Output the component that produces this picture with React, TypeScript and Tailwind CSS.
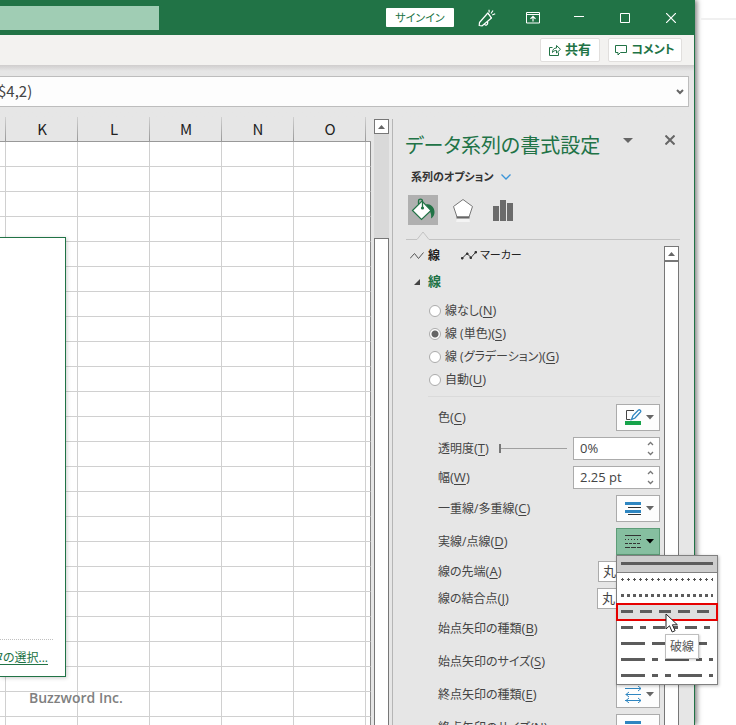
import type { ReactNode } from "react";

const columns = ["K", "L", "M", "N", "O"];
const rows = Array.from({ length: 24 }, (_, i) => i + 1);

const lineTypes = [
  { id: "none", label: "線なし", accessKey: "N" },
  { id: "solid", label: "線 (単色)", accessKey: "S" },
  { id: "gradient", label: "線 (グラデーション)", accessKey: "G" },
  { id: "auto", label: "自動", accessKey: "U" },
];

// dash/gap lengths for every style offered in the menu
const dashStyles = [
  { name: "実線", dash: "92 0" },
  { name: "点線 (丸)", dash: "" },
  { name: "点線 (角)", dash: "3 3" },
  { name: "破線", dash: "12 7" },
  { name: "一点鎖線", dash: "12 7 6 7" },
  { name: "長破線", dash: "24 7" },
  { name: "長鎖線", dash: "24 7 6 7" },
  { name: "長二点鎖線", dash: "24 7 6 7 6 7" },
];

function Key({ children }: { children: ReactNode }) {
  return (
    <span className="text-[13px]">
      (<span className="underline underline-offset-2">{children}</span>)
    </span>
  );
}

function Caret({ className }: { className: string }) {
  return (
    <svg width="8" height="5" viewBox="0 0 8 5" className={className}>
      <path d="M0 0h8L4 4.5z" fill="currentColor" />
    </svg>
  );
}

function TitleBar() {
  return (
    <header className="flex h-[35px] items-center bg-[#217346] text-white">
      <input aria-label="検索" className="h-6 w-[159px] bg-[#a0cdb4] outline-none" />
      <div className="ml-auto flex items-center">
        <button className="mr-[10px] h-[19px] w-[68px] rounded-[1px] bg-white text-[11px] leading-[19px] text-[#217346]">
          サインイン
        </button>
        <button aria-label="描画" className="flex h-[35px] w-[46px] items-center justify-center">
          <svg width="18" height="18" viewBox="0 0 18 18" fill="none" stroke="white" strokeWidth="1.2">
            <path d="M9.8 4 1.5 13.500 1.200 16.500l3 .3L13.500 9z" strokeLinejoin="round" />
            <path d="M6.500 15c.5 2 4 1.500 3-2.500M9.800 4l3.700 5" />
            <path d="M11.200 3.500 11 .8M13 4.500l2-3M14.200 6l3-1.300" />
          </svg>
        </button>
        <button aria-label="リボンの表示オプション" className="flex h-[35px] w-[46px] items-center justify-center">
          <svg width="14" height="12" viewBox="0 0 14 12" fill="none" stroke="white">
            <path d="M.5.500h13v10.500H.5zM.5 2.500h13" />
            <path d="M7 9.500V4.500M4.500 6.800 7 4.300l2.500 2.500" strokeWidth="1.200" />
          </svg>
        </button>
        <button aria-label="最小化" className="flex h-[35px] w-[46px] items-center justify-center">
          <svg width="10" height="10" viewBox="0 0 10 10" stroke="white">
            <path d="M0 3.500h10" />
          </svg>
        </button>
        <button aria-label="最大化" className="flex h-[35px] w-[46px] items-center justify-center">
          <svg width="10" height="10" viewBox="0 0 10 10" fill="none" stroke="white">
            <path d="M.5.500h9v9h-9z" />
          </svg>
        </button>
        <button aria-label="閉じる" className="flex h-[35px] w-[46px] items-center justify-center">
          <svg width="10" height="10" viewBox="0 0 10 10" stroke="white" strokeWidth="1.200">
            <path d="M0 0l10 10M10 0 0 10" />
          </svg>
        </button>
      </div>
    </header>
  );
}

function RibbonTabs() {
  return (
    <div className="flex h-[30px] items-center justify-end gap-2 bg-[#f3f2f0] pr-3 text-[13px] font-bold text-[#217346]">
      <button className="flex h-6 w-[60px] items-center justify-center gap-1 rounded-[2px] border border-[#e1dfdd] bg-white">
        <svg width="12" height="12" viewBox="0 0 12 12" fill="none" stroke="currentColor">
          <path d="M3.500 3.500H.5v8h9V8.500" />
          <path d="M3.500 8.500c0-3 1.500-4.500 4-4.500V1.500l4 3.800-4 3.700V6.500c-2 0-3 .5-4 2z" />
        </svg>
        共有
      </button>
      <button className="flex h-6 w-[74px] items-center justify-center gap-1 rounded-[2px] border border-[#e1dfdd] bg-white text-xs">
        <svg width="12" height="11" viewBox="0 0 12 11" fill="none" stroke="currentColor">
          <path d="M.5.500h11v7h-6L3 10V7.500H.500z" />
        </svg>
        コメント
      </button>
    </div>
  );
}

function FormulaBar() {
  return (
    <div className="bg-linear-to-b from-[#cfcdcd] to-[#e6e6e6] to-[6px] pt-[11px] pr-[5px] pb-[10px]">
      <div className="flex h-[31px] items-center overflow-hidden border-y border-r border-[#bdbdbd] bg-[#fdfdfd] pr-1">
        <input
          aria-label="数式バー"
          defaultValue="$4,2)"
          className="-ml-[2px] min-w-0 flex-1 bg-transparent pb-[2px] font-['Noto_Sans_CJK_JP',sans-serif] text-[15px] leading-5 text-[#444] outline-none"
        />
        <button aria-label="数式バーの展開" className="text-[#666]">
          <svg width="8" height="6" viewBox="0 0 8 6" fill="none" stroke="currentColor" strokeWidth="2">
            <path d="M1 1l3 3 3-3" />
          </svg>
        </button>
      </div>
    </div>
  );
}

function ChartPopup() {
  return (
    <div className="absolute top-[120px] left-0 flex h-[440px] w-[66px] flex-col justify-end overflow-hidden border-y border-r border-[#217346] bg-white shadow-[1px_1px_4px_rgba(0,0,0,0.2)]">
      <div className="mr-3 border-t border-dotted border-[#c0c0c0]" />
      <div className="flex justify-end pt-2 pr-[17px] pb-2 text-xs leading-[20px]">
        <a href="#select" className="whitespace-nowrap text-[#217346] underline underline-offset-2">
          タの選択...
        </a>
      </div>
    </div>
  );
}

function Sheet() {
  return (
    <div className="relative min-w-0 flex-1 overflow-hidden">
      <table className="w-full table-fixed border-separate border-spacing-0 bg-white">
        <colgroup>
          <col className="w-[6px]" />
          {columns.map((c) => (
            <col key={c} />
          ))}
          <col className="w-[5px]" />
        </colgroup>
        <thead>
          <tr className="h-[25px] bg-[#e6e6e6] font-['Noto_Sans_CJK_JP',sans-serif] text-[15px] text-[#222]">
            <th className="border-b border-[#999] bg-linear-to-b from-[#d0d0d0] to-[#999] bg-[length:1px_100%] bg-right bg-no-repeat p-0" />
            {columns.map((c) => (
              <th
                key={c}
                className="border-b border-[#999] bg-linear-to-b from-[#d0d0d0] to-[#999] bg-[length:1px_100%] bg-right bg-no-repeat p-0 leading-6 font-normal"
              >
                {c}
              </th>
            ))}
            <th className="border-b border-[#999] p-0" />
          </tr>
        </thead>
        <tbody>
          {rows.map((r) => (
            <tr key={r} className="h-[25px]">
              <td className="border-r border-b border-[#d0d0d0] p-0" />
              {columns.map((c) => (
                <td key={c} className="border-r border-b border-[#d0d0d0] p-0" />
              ))}
              <td className="border-r border-b border-r-[#888] border-b-[#d0d0d0] p-0" />
            </tr>
          ))}
        </tbody>
      </table>
      <ChartPopup />
      <p className="absolute top-[571px] left-[29px] font-['Open_Sans',sans-serif] text-sm leading-5 font-semibold text-[#808080]">
        Buzzword Inc.
      </p>
    </div>
  );
}

function ScrollUpButton() {
  return (
    <button
      aria-label="上へスクロール"
      className="flex h-[15px] w-[15px] shrink-0 items-center justify-center border border-[#777] bg-white text-[#666]"
    >
      <svg width="7" height="4" viewBox="0 0 7 4">
        <path d="M0 4h7L3.500 0z" fill="currentColor" />
      </svg>
    </button>
  );
}

function PaneTabs() {
  return (
    <div className="flex h-[30px] gap-[10px] pl-[15px]">
      <button aria-label="塗りつぶしと線" className="flex w-[30px] items-center justify-center bg-[#b0b0b0]">
        <svg width="24" height="24" viewBox="0 0 24 24" fill="none">
          <path d="M15 6c5 0 8.500 3.500 8.500 8 0 3-1 5-3.500 6.500.5-3.500 0-6-2-8z" fill="#217346" />
          <path d="M1.500 12.500 11 3l9 9.500-9.500 9z" fill="white" stroke="#217346" strokeWidth="1.200" />
          <path d="M7.500 6V3c0-2.500 4-2.500 4 0v6" stroke="#217346" strokeWidth="1.300" />
          <circle cx="11.500" cy="10" r="1.600" fill="#217346" />
        </svg>
      </button>
      <button aria-label="効果" className="flex w-[30px] items-center justify-center">
        <svg width="22" height="24" viewBox="0 0 22 24">
          <path d="M5 20.500h12l1 3.500H4z" fill="#f4f4f4" />
          <path d="M11 1.500 20.500 8.500 17 19H5L1.500 8.500z" fill="white" stroke="#777" />
          <path d="M4.500 19.500h13" stroke="#666" strokeWidth="2" />
        </svg>
      </button>
      <button aria-label="系列のオプション" className="flex w-[30px] items-center justify-center">
        <svg width="20" height="21" viewBox="0 0 20 21" fill="#6b6b6b">
          <path d="M0 6h6v15H0zM7 0h6v21H7zM14 3h6v18h-6z" />
        </svg>
      </button>
    </div>
  );
}

interface RowProps {
  label: string;
  accessKey: string;
  height: string;
  children?: ReactNode;
}

function Row({ label, accessKey, height, children }: RowProps) {
  return (
    <div className={`relative flex items-center ${height}`}>
      <label htmlFor={`row-${label}`} className="whitespace-nowrap">
        {label}
        <Key>{accessKey}</Key>
      </label>
      {children}
    </div>
  );
}

function DropButton({ id, children }: { id: string; children: ReactNode }) {
  return (
    <button
      id={`row-${id}`}
      className="ml-auto flex h-[27px] w-[44px] items-center justify-between border border-[#ababab] bg-[#fdfdfd] pr-[5px] pl-2"
    >
      {children}
      <Caret className="text-[#666]" />
    </button>
  );
}

function Spinner({ id, value }: { id: string; value: string }) {
  return (
    <div className="ml-auto flex h-[23px] w-[87px] items-center border border-[#ababab] bg-white pr-[5px] pl-[6px]">
      <input
        id={`row-${id}`}
        defaultValue={value}
        className="min-w-0 flex-1 bg-transparent pb-[2px] font-['Open_Sans',sans-serif] text-[13px] leading-[18px] text-[#444] outline-none"
      />
      <svg width="7" height="15" viewBox="0 0 7 15" fill="none" stroke="#777" strokeWidth="1.300">
        <path d="M1 4l2.500-2.500L6 4M1 11l2.500 2.500L6 11" />
      </svg>
    </div>
  );
}

function ArrowSizeIcon() {
  return (
    <svg width="17" height="17" viewBox="0 0 17 17" fill="none" stroke="#2f86c1">
      <path d="M0 2.500h16M13 0l3 2.500L13 5M.5 8.500H16M4 6 1 8.500 4 11M0 14.500h16M13 12l3 2.500-3 2.500M4 12l-3 2.500L4 17" />
    </svg>
  );
}

function CompoundIcon() {
  return (
    <svg width="16" height="14" viewBox="0 0 16 14">
      <path d="M0 0h16v3H0zM0 8h16v3H0z" fill="#2f86c1" />
      <path d="M3 5h13v1H3zM3 12h13v1H3z" fill="#333" />
    </svg>
  );
}

function DashMenu() {
  return (
    <div
      role="listbox"
      aria-label="実線/点線"
      className="absolute top-full -right-[58px] z-10 w-[102px] border border-[#808080] bg-white shadow-[1px_1px_3px_rgba(0,0,0,0.25)]"
    >
      {dashStyles.map((style, i) => (
        <button
          key={style.name}
          role="option"
          aria-selected={i === 0}
          aria-label={style.name}
          className={`flex h-4 w-full items-start justify-center pt-[6px] ${
            i === 0
              ? "bg-[#cdcdcd] outline-1 outline-[#808080]"
              : i === 3
                ? "relative bg-[#dedede] outline-2 -outline-offset-1 outline-[#e60000]"
                : ""
          }`}
        >
          <svg width="92" height="3" viewBox="0 0 92 3">
            {style.dash === "" ? (
              <g stroke="#555" fill="none">
                <path d="M1 .5h92" strokeDasharray="1 5" />
                <path d="M0 1.500h92" strokeDasharray="3 3" />
                <path d="M1 2.500h92" strokeDasharray="1 5" />
              </g>
            ) : (
              <path d="M0 1.500h92" stroke="#5c5c5c" strokeWidth="3" strokeDasharray={style.dash} />
            )}
          </svg>
        </button>
      ))}
      <svg width="14" height="20" viewBox="0 0 14 20" className="absolute top-[57px] left-[48px] z-10">
        <path d="M1 1v15l3.500-3.200L7.200 19l2.900-1.300L7.400 11.800h5z" fill="white" stroke="#222" />
      </svg>
      <div
        role="tooltip"
        className="absolute top-[78px] left-[48px] border border-[#bebebe] bg-white px-1 text-xs leading-[23px] whitespace-nowrap text-[#555] shadow-[1px_1px_2px_rgba(0,0,0,0.2)]"
      >
        破線
      </div>
    </div>
  );
}

function LineSettings() {
  return (
    <div className="flex flex-col gap-[6px] pl-[10px]">
      <Row label="色" accessKey="C" height="h-[27px]">
        <DropButton id="色">
          <svg width="17" height="17" viewBox="0 0 17 17" fill="none">
            <path d="M9 1.500H1.500v9h4" stroke="#444" />
            <path d="M6.500 10.500 8 6.500 13.500 1c1-.8 3 .8 2 2L10 9z" fill="white" stroke="#2f86c1" strokeWidth="1.300" />
            <path d="M0 12h16v4H0z" fill="#16a34a" />
          </svg>
        </DropButton>
      </Row>
      <Row label="透明度" accessKey="T" height="h-[23px]">
        <div className="ml-[10px] flex flex-1 items-center">
          <span className="h-[9px] w-[2px] bg-[#777]" />
          <span className="mr-[6px] h-px flex-1 bg-[#a0a0a0]" />
        </div>
        <Spinner id="透明度" value="0%" />
      </Row>
      <Row label="幅" accessKey="W" height="h-[23px]">
        <Spinner id="幅" value="2.25 pt" />
      </Row>
      <Row label="一重線/多重線" accessKey="C" height="h-[27px]">
        <DropButton id="一重線/多重線">
          <CompoundIcon />
        </DropButton>
      </Row>
      <Row label="実線/点線" accessKey="D" height="h-[27px]">
        <button
          id="row-実線/点線"
          aria-expanded="true"
          className="ml-auto flex h-[27px] w-[44px] items-center justify-between border border-[#5d9c78] bg-[#86bfa0] pr-[5px] pl-2"
        >
          <svg width="16" height="14" viewBox="0 0 16 14" stroke="#333" fill="none">
            <path d="M0 .5h16" />
            <path d="M0 4.500h16" strokeDasharray="1 2" />
            <path d="M0 8.500h16" strokeDasharray="3 1" />
            <path d="M0 12.500h16" strokeDasharray="5 1" />
          </svg>
          <Caret className="text-black" />
        </button>
        <DashMenu />
      </Row>
      <Row label="線の先端" accessKey="A" height="h-[21px]">
        <select
          id="row-線の先端"
          className="ml-auto h-[21px] w-[62px] appearance-none border border-[#ababab] bg-white pl-1 text-[13px] leading-[19px]"
        >
          <option>丸</option>
        </select>
      </Row>
      <Row label="線の結合点" accessKey="J" height="h-[21px]">
        <select
          id="row-線の結合点"
          className="ml-auto h-[21px] w-[63px] appearance-none border border-[#ababab] bg-white pl-1 text-[13px] leading-[19px]"
        >
          <option>丸</option>
        </select>
      </Row>
      <Row label="始点矢印の種類" accessKey="B" height="h-[27px]">
        <DropButton id="始点矢印の種類">
          <ArrowSizeIcon />
        </DropButton>
      </Row>
      <Row label="始点矢印のサイズ" accessKey="S" height="h-[27px]">
        <DropButton id="始点矢印のサイズ">
          <CompoundIcon />
        </DropButton>
      </Row>
      <Row label="終点矢印の種類" accessKey="E" height="h-[27px]">
        <DropButton id="終点矢印の種類">
          <ArrowSizeIcon />
        </DropButton>
      </Row>
      <Row label="終点矢印のサイズ" accessKey="N" height="h-[27px]">
        <DropButton id="終点矢印のサイズ">
          <CompoundIcon />
        </DropButton>
      </Row>
    </div>
  );
}

function FormatPane() {
  return (
    <aside className="mt-[2px] flex w-[302px] shrink-0 flex-col border-l border-[#b5b5b5] text-xs text-[#444]">
      <div className="flex h-[46px] items-center pt-[5px] pr-[19px] pl-3">
        <h2 className="flex-1 pt-[2px] text-[20px] leading-[30px] whitespace-nowrap text-[#217346]">データ系列の書式設定</h2>
        <button aria-label="作業ウィンドウのオプション" className="mb-2 mr-8 text-[#666]">
          <svg width="10" height="5" viewBox="0 0 10 5">
            <path d="M0 0h10L5 5z" fill="currentColor" />
          </svg>
        </button>
        <button aria-label="閉じる" className="mb-[10px] text-[#666]">
          <svg width="10" height="10" viewBox="0 0 10 10" stroke="currentColor" strokeWidth="2">
            <path d="M.5.500l9 9M9.500.500l-9 9" />
          </svg>
        </button>
      </div>
      <button className="flex h-6 items-center gap-[7px] pl-[18px] text-[11px] font-bold text-[#333]">
        系列のオプション
        <svg width="10" height="6" viewBox="0 0 10 6" fill="none" stroke="#3b95d9" strokeWidth="1.300">
          <path d="M.5.500 5 5 9.500.500" />
        </svg>
      </button>
      <div className="mt-[6px]">
        <PaneTabs />
      </div>
      <div className="mt-[6px] mr-[14px] ml-[13px] flex h-[9px] items-end">
        <span className="h-px w-[10px] bg-[#c3c3c3]" />
        <svg width="14" height="9" viewBox="0 0 14 9" fill="none" stroke="#c3c3c3">
          <path d="M0 8.500h1L7 1l6 7.500h1" />
        </svg>
        <span className="h-px flex-1 bg-[#c3c3c3]" />
      </div>
      <div className="flex min-h-0 flex-1 pt-[6px] pr-[15px]">
        <div className="flex-1 pr-1 pl-[17px]">
          <div className="flex h-[19px] items-center text-[#222]">
            <button className="flex items-center gap-1 font-bold">
              <svg width="14" height="8" viewBox="0 0 14 8" fill="none" stroke="#555">
                <path d="M0 6.500 4.500 1.500l4 5L13.500.500" />
              </svg>
              線
            </button>
            <button className="ml-[21px] flex items-center gap-[3px] text-[11px]">
              <svg width="16" height="9" viewBox="0 0 16 9" fill="#333" stroke="#333">
                <path d="M1.500 7 6 2.500l4 4L14.500 1.500" fill="none" />
                <path d="M.5 6.500h1.500v1.500H.5zM5.500 2h1.500v1.500H5.500zM9 6h1.500v1.500H9zM14 .500h1.500V2H14z" />
              </svg>
              マーカー
            </button>
          </div>
          <button className="mt-2 flex h-[18px] items-center gap-2 pl-1 text-[13px] font-bold text-[#217346]">
            <svg width="6" height="6" viewBox="0 0 6 6">
              <path d="M6 0v6H0z" fill="#444" />
            </svg>
            線
          </button>
          <fieldset className="mt-2 ml-[19px]">
            {lineTypes.map((type) => (
              <label key={type.id} className="flex h-[23px] items-center gap-1">
                <input
                  type="radio"
                  name="line-type"
                  defaultChecked={type.id === "solid"}
                  className="h-3 w-3 appearance-none rounded-full border border-[#ababab] bg-white checked:bg-[radial-gradient(#666_3px,white_4px)]"
                />
                <span className="whitespace-nowrap">
                  {type.label}
                  <Key>{type.accessKey}</Key>
                </span>
              </label>
            ))}
          </fieldset>
          <div className="mt-[5px] ml-[18px] border-t border-[#dadada] pt-[7px]">
            <LineSettings />
          </div>
        </div>
        <div className="flex w-[15px] flex-col">
          <ScrollUpButton />
          <div className="flex-1 border border-b-0 border-[#777] bg-white" />
        </div>
      </div>
    </aside>
  );
}

export default function App() {
  return (
    <div className="h-screen overflow-hidden bg-white font-['Open_Sans','Noto_Sans_CJK_JP',sans-serif] [font-feature-settings:'palt']">
      <div className="flex h-full">
        <main className="flex h-full min-w-0 flex-1 flex-col border-r border-[#217346] bg-[#e6e6e6] shadow-[2px_0_5px_rgba(0,0,0,0.5)]">
          <TitleBar />
          <RibbonTabs />
          <FormulaBar />
          <div className="flex min-h-0 flex-1">
            <Sheet />
            <div className="mt-[2px] mr-[3px] ml-[3px] flex w-[15px] shrink-0 flex-col">
              <ScrollUpButton />
              <div className="h-[104px] bg-[#d9d9d9]" />
              <div className="flex-1 border border-b-0 border-[#777] bg-white" />
            </div>
            <FormatPane />
          </div>
        </main>
        <div className="w-[41px] shrink-0 pt-[18px] pl-[6px]">
          <div className="h-[2px] bg-[#f0f0f0]" />
        </div>
      </div>
    </div>
  );
}
